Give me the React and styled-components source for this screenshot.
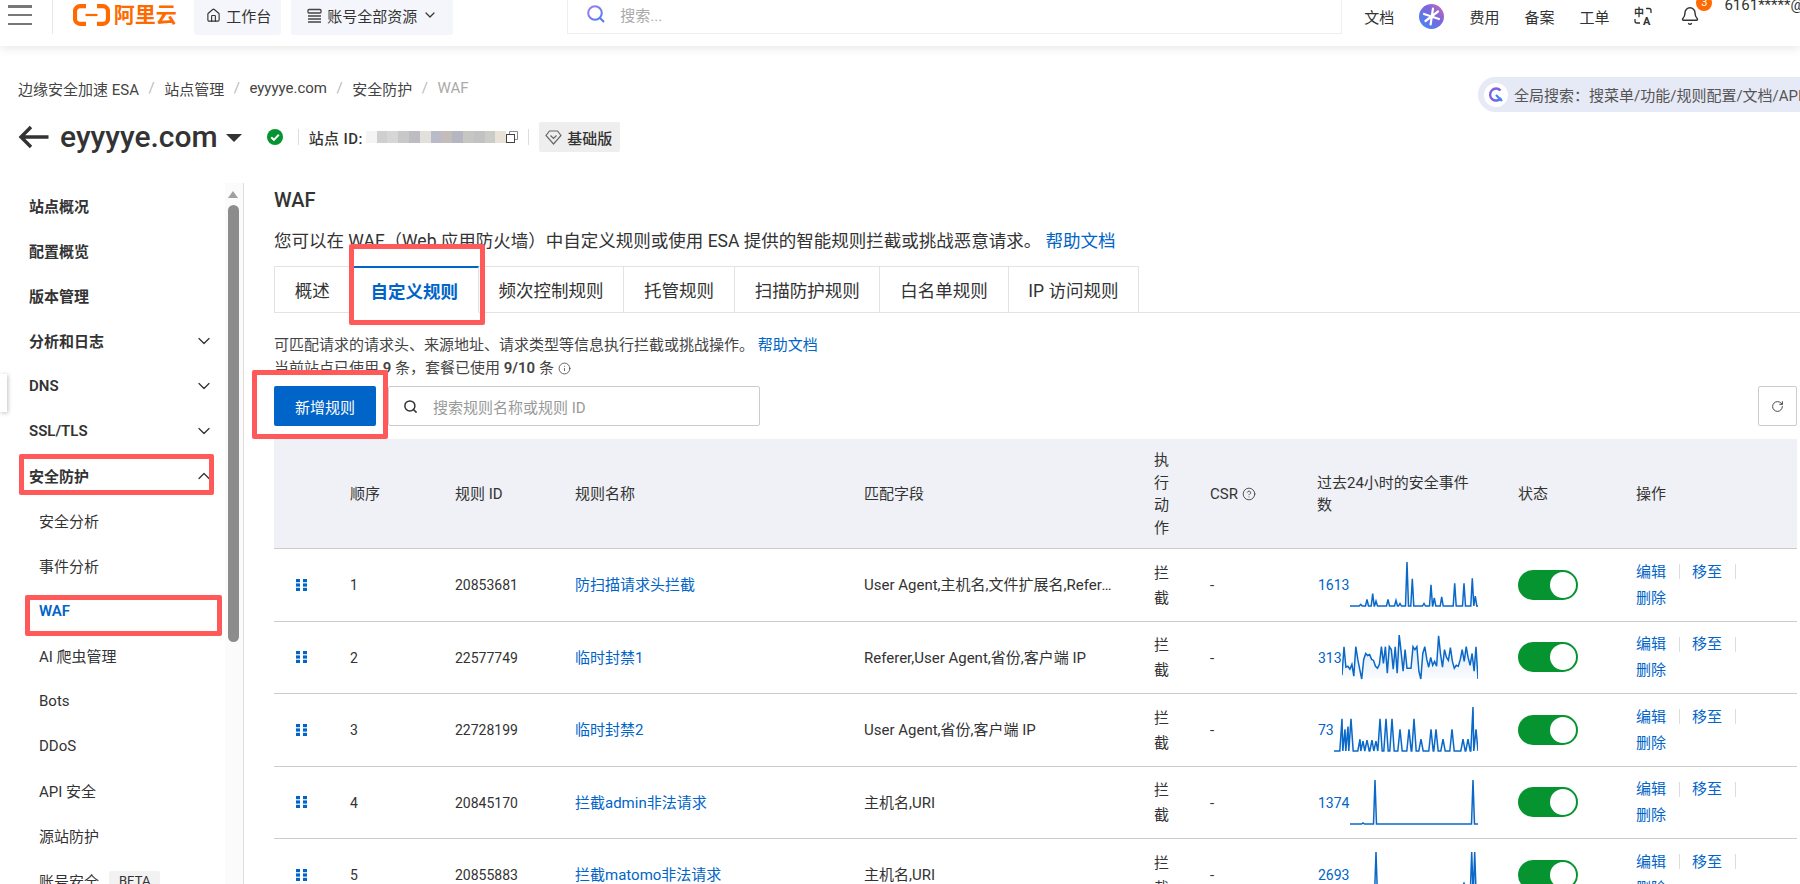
import React from 'react'
import styled, { createGlobalStyle } from 'styled-components'
import { House, ChevronDown, ChevronUp, Search, Bell, RotateCw, Info, CircleHelp } from 'lucide-react'

const sideItems = [
  { label: '站点概况', bold: true },
  { label: '配置概览', bold: true },
  { label: '版本管理', bold: true },
  { label: '分析和日志', bold: true, arrow: 'down' },
  { label: 'DNS', bold: true, arrow: 'down' },
  { label: 'SSL/TLS', bold: true, arrow: 'down' },
  { label: '安全防护', bold: true, arrow: 'up' },
  { label: '安全分析' },
  { label: '事件分析' },
  { label: 'WAF', active: true },
  { label: 'AI 爬虫管理' },
  { label: 'Bots' },
  { label: 'DDoS' },
  { label: 'API 安全' },
  { label: '源站防护' },
  { label: '账号安全', beta: true },
]

const tabs = ['概述', '自定义规则', '频次控制规则', '托管规则', '扫描防护规则', '白名单规则', 'IP 访问规则']

const blurColors = ['#f4f4f4', '#cfcfcf', '#d6d6d6', '#c8c8c8', '#bcbcc2', '#e2e0da', '#b9bcc8', '#c4bcb8', '#b6b6c0', '#c6c6c2', '#c2c2c2', '#cbcbc8', '#e8e2d8']

const rows = [
  {
    id: '20853681', name: '防扫描请求头拦截', match: 'User Agent,主机名,文件扩展名,Referer,URI', count: '1613', width: 128, spread: 1.5,
    peaks: [[10.7, 1.7], [17, 6.7], [22.7, 12.7], [26, 5], [38, 6.7], [46, 5.7], [50, 2.7], [57, 45], [62.3, 27.7], [74, 2.7], [81, 21.7], [84.3, 8.3], [91.7, 9.3], [104.7, 23.3], [114, 23.3], [122.3, 28.3], [125.3, 10]],
  },
  {
    id: '22577749', name: '临时封禁1', match: 'Referer,User Agent,省份,客户端 IP', count: '313', width: 136,
    values: [4, 33, 12, 13, 10, 15, 3, 33, 20, 10, 0, 20, 26, 24, 25, 20, 19, 13, 11, 15, 33, 16, 33, 6, 33, 30, 10, 33, 6, 45, 28, 8, 30, 11, 11, 11, 33, 30, 33, 8, 0, 26, 33, 20, 12, 22, 14, 18, 13, 44, 25, 12, 30, 22, 19, 32, 18, 11, 14, 13, 20, 30, 18, 33, 22, 14, 26, 8, 33, 0],
  },
  {
    id: '22728199', name: '临时封禁2', match: 'User Agent,省份,客户端 IP', count: '73', width: 144, spread: 2.2,
    peaks: [[8, 33], [11, 22], [14, 25], [17, 33], [26, 12], [29, 10], [33, 11], [38, 11], [42, 10], [46, 33], [52, 33], [58, 33], [66, 22], [75, 22], [80, 33], [87, 12], [97, 22], [102, 22], [109, 12], [118, 22], [129, 12], [134, 12], [139, 45], [142, 22]],
  },
  {
    id: '20845170', name: '拦截admin非法请求', match: '主机名,URI', count: '1374', width: 128, spread: 1.5,
    peaks: [[13, 1], [25, 45], [123, 45]],
  },
  {
    id: '20855883', name: '拦截matomo非法请求', match: '主机名,URI', count: '2693', width: 128, spread: 1.5,
    peaks: [[26, 45], [114, 14], [121.7, 45], [124.7, 45]],
  },
]

// sparkline points, y is height above the baseline
const spikePoints = (w, peaks, hw) => {
  const pts = [[0, 0]]
  peaks.forEach(([x, h], i) => {
    const next = peaks[i + 1]
    if (pts[pts.length - 1][0] < x - hw) pts.push([x - hw, 0])
    pts.push([x, h])
    if (!next || next[0] - hw > x + hw) pts.push([Math.min(x + hw, w), 0])
  })
  pts.push([w, 0])
  return pts
}

const valuePoints = (w, values) => values.map((v, i) => [(i * w) / (values.length - 1), v])

function Spark({ row, index }) {
  const w = row.width
  const pts = row.values ? valuePoints(w, row.values) : spikePoints(w, row.peaks, row.spread)
  const line = pts.map(([x, y]) => `${x.toFixed(1)},${(44 - y * 0.98).toFixed(1)}`).join(' ')
  return (
    <svg width={w} height="45" viewBox={`0 0 ${w} 45`}>
      <defs>
        <linearGradient id={`fade${index}`} x1="0" y1="0" x2="0" y2="1">
          <stop offset="0" stopColor="#0064c8" stopOpacity="0.16" />
          <stop offset="1" stopColor="#0064c8" stopOpacity="0.02" />
        </linearGradient>
      </defs>
      <polygon points={`0,44 ${line} ${w},44`} fill={`url(#fade${index})`} />
      <polyline points={line} fill="none" stroke="#0a68c8" strokeWidth="1.5" />
    </svg>
  )
}

function App() {
  return (
    <Page>
      <GlobalStyle />
      <TopBar>
        <Burger><i /><i /><i /></Burger>
        <Logo>
          <svg width="37" height="22" viewBox="0 0 37 22">
            <g fill="none" stroke="#ff6a00" strokeWidth="4.2">
              <path d="M13 2.2H7a5 5 0 0 0-5 5v7.6a5 5 0 0 0 5 5h6" />
              <path d="M24 2.2h6a5 5 0 0 1 5 5v7.6a5 5 0 0 1-5 5h-6" />
            </g>
            <path d="M12.5 11h12" stroke="#ff6a00" strokeWidth="2.2" />
          </svg>
          <span>阿里云</span>
        </Logo>
        <TopBox $w={87} $pl={12}>
          <House size={15} strokeWidth={1.8} />
          工作台
        </TopBox>
        <TopBox $w={162} $pl={16}>
          <svg width="15" height="15" viewBox="0 0 15 15" fill="none" stroke="#444" strokeWidth="1.3">
            <rect x="1" y="1.5" width="13" height="3.5" rx="1" />
            <path d="M1 8h13M14 8v0M1 11h13M1 14h13" />
          </svg>
          账号全部资源
          <ChevronDown size={16} strokeWidth={1.8} />
        </TopBox>
        <TopSearch>
          <svg width="20" height="20" viewBox="0 0 20 20" fill="none">
            <defs>
              <linearGradient id="ring" x1="0" y1="0" x2="1" y2="1">
                <stop offset="0" stopColor="#a77bf0" />
                <stop offset="1" stopColor="#4f7cf0" />
              </linearGradient>
            </defs>
            <circle cx="9" cy="9" r="6.8" stroke="url(#ring)" strokeWidth="2" />
            <path d="M14 14l4 4" stroke="#4f7cf0" strokeWidth="2" />
          </svg>
          <span>搜索...</span>
        </TopSearch>
        <TopRight>
          <span>文档</span>
          <svg width="25" height="25" viewBox="0 0 25 25">
            <defs>
              <linearGradient id="star" x1="0" y1="1" x2="1" y2="0">
                <stop offset="0" stopColor="#3f8cf5" />
                <stop offset="0.6" stopColor="#7b66dc" />
                <stop offset="1" stopColor="#d56bb0" />
              </linearGradient>
            </defs>
            <circle cx="12.5" cy="12.5" r="12.5" fill="url(#star)" />
            <path d="M14 4.5l-2.4 16M5 10l15 5M19 7.5L6.500 17" stroke="#fff" strokeWidth="2.2" strokeLinecap="round" />
          </svg>
          <span>费用</span>
          <span>备案</span>
          <span>工单</span>
          <svg width="20" height="18" viewBox="0 0 20 18" fill="#333" overflow="visible">
            <text x="0" y="9" fontSize="10" fontWeight="700" fontFamily="Noto Sans CJK SC">中</text>
            <text x="9" y="17.500" fontSize="11" fontWeight="700" fontFamily="Roboto">A</text>
            <path d="M12 1.500h3a2 2 0 0 1 2 2V6M1 12v2a2 2 0 0 0 2 2h3" fill="none" stroke="#333" strokeWidth="1.3" />
          </svg>
          <BellWrap>
            <Bell size={20} strokeWidth={1.7} />
            <Badge>3</Badge>
          </BellWrap>
          <UserDivider />
          <UserName>6161*****@</UserName>
        </TopRight>
      </TopBar>

      <CrumbRow>
        <Crumbs>
          <span>边缘安全加速 ESA</span><b>/</b>
          <span>站点管理</span><b>/</b>
          <span>eyyyye.com</span><b>/</b>
          <span>安全防护</span><b>/</b>
          <em>WAF</em>
        </Crumbs>
        <GlobalSearch>
          <PillIcon>
            <svg width="18" height="18" viewBox="0 0 18 18" fill="none">
              <path d="M13.500 4.500A6 6 0 1 0 14 12" stroke="#7a62e0" strokeWidth="2.4" />
              <path d="M9 9l6 6" stroke="#3f8cf5" strokeWidth="2.4" />
            </svg>
          </PillIcon>
          全局搜索：搜菜单/功能/规则配置/文档/API
        </GlobalSearch>
      </CrumbRow>

      <TitleRow>
        <svg width="31" height="24" viewBox="0 0 31 24" fill="none" stroke="#333" strokeWidth="3.4">
          <path d="M30.500 12H4M13 2L3 12l10 10" />
        </svg>
        <SiteName>eyyyye.com</SiteName>
        <Caret />
        <svg width="16" height="16" viewBox="0 0 16 16">
          <circle cx="8" cy="8" r="8" fill="#069431" />
          <path d="M4.200 8.200l2.700 2.700 4.900-5.200" fill="none" stroke="#fff" strokeWidth="2" />
        </svg>
        <VLine />
        <SiteId>站点 ID:</SiteId>
        <Blur>
          {blurColors.map((c, i) => <BlurCell key={i} $c={c} />)}
        </Blur>
        <svg width="12" height="12" viewBox="0 0 12 12" fill="none" stroke="#444">
          <rect x="0.500" y="3.500" width="8" height="8" />
          <path d="M3.500 3V.5h8v8H9" stroke="#888" />
        </svg>
        <VLine $wide />
        <Edition>
          <svg width="17" height="15" viewBox="0 0 17 15" fill="none" stroke="#666" strokeWidth="1.2">
            <path d="M4.500 1h8l3.500 4.500-7.500 8.500L1 5.500z" />
            <path d="M5.500 5.500l3 3 3-3" />
          </svg>
          基础版
        </Edition>
      </TitleRow>

      <Body>
        <Sidebar>
          <Menu>
            {sideItems.map((item) => (
              <MenuItem key={item.label} $bold={item.bold} $active={item.active}>
                {item.label}
                {item.beta && <Beta>BETA</Beta>}
                {item.arrow === 'down' && <MenuArrow><ChevronDown size={20} strokeWidth={1.5} /></MenuArrow>}
                {item.arrow === 'up' && <MenuArrow><ChevronUp size={20} strokeWidth={1.5} /></MenuArrow>}
              </MenuItem>
            ))}
          </Menu>
          <ScrollTrack>
            <ScrollUp />
            <ScrollThumb />
          </ScrollTrack>
        </Sidebar>

        <Main>
          <H1>WAF</H1>
          <Desc>您可以在 WAF（Web 应用防火墙）中自定义规则或使用 ESA 提供的智能规则拦截或挑战恶意请求。 <a>帮助文档</a></Desc>
          <TabBar>
            {tabs.map((t, i) => <Tab key={t} $active={i === 1}>{t}</Tab>)}
          </TabBar>
          <Hint>可匹配请求的请求头、来源地址、请求类型等信息执行拦截或挑战操作。 <a>帮助文档</a></Hint>
          <Hint>当前站点已使用 <b>9</b> 条，套餐已使用 <b>9/10</b> 条 <Info size={13} strokeWidth={1.5} /></Hint>
          <Toolbar>
            <AddButton>新增规则</AddButton>
            <SearchBox>
              <Search size={15} strokeWidth={2.4} color="#333" />
              <span>搜索规则名称或规则 ID</span>
            </SearchBox>
            <RefreshButton><RotateCw size={13} strokeWidth={1.6} /></RefreshButton>
          </Toolbar>

          <Table>
            <HeadRow>
              <HeadCell />
              <HeadCell>顺序</HeadCell>
              <HeadCell>规则 ID</HeadCell>
              <HeadCell>规则名称</HeadCell>
              <HeadCell>匹配字段</HeadCell>
              <HeadCell>执行动作</HeadCell>
              <HeadCell>CSR&nbsp;<CircleHelp size={14} strokeWidth={1.4} /></HeadCell>
              <HeadCell>过去24小时的安全事件数</HeadCell>
              <HeadCell>状态</HeadCell>
              <HeadCell>操作</HeadCell>
            </HeadRow>
            {rows.map((r, i) => (
              <DataRow key={r.id}>
                <DragCell>
                  <svg width="11" height="12" viewBox="0 0 11 12" fill="#0064c8">
                    <rect x="0" y="0" width="4" height="3.200" />
                    <rect x="7" y="0" width="4" height="3.200" />
                    <rect x="0" y="4.400" width="4" height="3.200" />
                    <rect x="7" y="4.400" width="4" height="3.200" />
                    <rect x="0" y="8.800" width="4" height="3.200" />
                    <rect x="7" y="8.800" width="4" height="3.200" />
                  </svg>
                </DragCell>
                <NumCell>{i + 1}</NumCell>
                <NumCell>{r.id}</NumCell>
                <TextCell><RuleLink>{r.name}</RuleLink></TextCell>
                <MatchCell><span>{r.match}</span></MatchCell>
                <TextCell>拦截</TextCell>
                <TextCell>-</TextCell>
                <EventCell>
                  <a>{r.count}</a>
                  <Spark row={r} index={i} />
                </EventCell>
                <Cell><Toggle><Knob /></Toggle></Cell>
                <OpsCell>
                  <Ops>
                    <Op>编辑</Op>
                    <Op>移至</Op>
                    <Op>删除</Op>
                  </Ops>
                </OpsCell>
              </DataRow>
            ))}
          </Table>
        </Main>
      </Body>

      <CollapseHandle />
      <Mark $x={19} $y={454} $w={195} $h={41} />
      <Mark $x={25} $y={595} $w={197} $h={41} />
      <Mark $x={349} $y={244} $w={136} $h={81} />
      <Mark $x={252} $y={370} $w={136} $h={69} />
    </Page>
  )
}

export default App

const GlobalStyle = createGlobalStyle`
  html, body {
    margin: 0;
    height: 100%;
    overflow: hidden;
    background: #fff;
  }
  * { box-sizing: border-box; }
  a { color: #0064c8; cursor: pointer; }
`

const Page = styled.div`
  position: relative;
  width: 1800px;
  height: 884px;
  overflow: hidden;
  font-family: Roboto, "Noto Sans CJK SC", sans-serif;
  font-size: 15px;
  color: #333;
`

const TopBar = styled.header`
  display: flex;
  align-items: flex-start;
  height: 46px;
  background: #fff;
  box-shadow: 0 2px 10px rgba(0, 0, 0, 0.1);
  overflow: hidden;
  position: relative;
`

const Burger = styled.div`
  display: flex;
  flex-direction: column;
  justify-content: space-between;
  width: 53px;
  height: 34px;
  padding: 5px 20px 9px 8px;
  border-right: 1px solid #e8e8e8;
  i {
    display: block;
    height: 2.5px;
    background: #777;
  }
`

const Logo = styled.div`
  display: flex;
  align-items: center;
  gap: 4px;
  width: 143px;
  height: 30px;
  padding-left: 20px;
  color: #ff6a00;
  font-size: 21px;
  font-weight: 700;
  line-height: 30px;
`

const TopBox = styled.div`
  display: flex;
  align-items: center;
  gap: 5px;
  flex: none;
  width: ${(p) => p.$w}px;
  height: 35px;
  margin-right: 10px;
  padding: 0 0 5px ${(p) => p.$pl}px;
  background: #f5f6fb;
  border-radius: 0 0 3px 3px;
  white-space: nowrap;
  svg { flex: none; }
`

const TopSearch = styled.div`
  display: flex;
  align-items: center;
  gap: 14px;
  flex: none;
  width: 775px;
  height: 34px;
  margin-left: 104px;
  padding: 0 0 5px 18px;
  border: 1px solid #eeeef7;
  border-top: none;
  color: #aaa;
`

const TopRight = styled.div`
  display: flex;
  align-items: center;
  gap: 25px;
  height: 32px;
  margin-left: 22px;
  span { flex: none; }
  svg { flex: none; }
`

const BellWrap = styled.div`
  position: relative;
  display: flex;
  margin-left: 1px;
`

const Badge = styled.span`
  position: absolute;
  top: -11px;
  right: -12px;
  width: 16px;
  height: 16px;
  border-radius: 50%;
  background: #ff6a00;
  color: #fff;
  font-size: 11px;
  line-height: 16px;
  text-align: center;
`

const UserDivider = styled.div`
  width: 1px;
  height: 34px;
  margin-left: -12px;
  background: #eee;
`

const UserName = styled.span`
  align-self: flex-start;
  margin: -5px 0 0 -14px;
  line-height: 20px;
  white-space: nowrap;
`

const CrumbRow = styled.div`
  display: flex;
  align-items: flex-start;
  justify-content: space-between;
  height: 35px;
  margin-top: 31px;
  padding-left: 18px;
`

const Crumbs = styled.nav`
  display: flex;
  align-items: center;
  height: 22px;
  color: #444;
  b {
    margin: 0 9.500px;
    color: #bbb;
    font-weight: 400;
  }
  em {
    color: #aaa;
    font-style: normal;
  }
`

const GlobalSearch = styled.div`
  display: flex;
  align-items: center;
  gap: 6px;
  flex: none;
  width: 342px;
  height: 35px;
  margin-right: -20px;
  padding-left: 6px;
  border-radius: 18px 0 0 18px;
  background: #e6e9f6;
  color: #555;
  white-space: nowrap;
`

const PillIcon = styled.span`
  display: flex;
  align-items: center;
  justify-content: center;
  width: 24px;
  height: 24px;
  border-radius: 50%;
  background: #fff;
`

const TitleRow = styled.div`
  display: flex;
  align-items: center;
  height: 30px;
  margin-top: 10px;
  padding-left: 18px;
`

const SiteName = styled.h2`
  margin: 0 0 0 11px;
  font-size: 30px;
  font-weight: 500;
  line-height: 30px;
  color: #333;
`

const Caret = styled.span`
  width: 0;
  height: 0;
  margin: 2px 25px 0 8px;
  border-left: 8.500px solid transparent;
  border-right: 8.500px solid transparent;
  border-top: 8px solid #333;
`

const VLine = styled.span`
  width: 1px;
  height: 16px;
  margin: 0 10px 0 ${(p) => (p.$wide ? '10px' : '15px')};
  background: #ddd;
`

const SiteId = styled.span`
  font-weight: 500;
  letter-spacing: 0.4px;
  white-space: nowrap;
`

const Blur = styled.div`
  display: flex;
  margin-left: 3px;
`

const BlurCell = styled.i`
  display: block;
  width: 10.800px;
  height: 12px;
  background: ${(p) => p.$c};
`

const Edition = styled.div`
  display: flex;
  align-items: center;
  gap: 5px;
  height: 30px;
  padding: 0 8px 0 6px;
  background: #eee;
  border-radius: 2px;
  font-weight: 500;
  white-space: nowrap;
`

const Body = styled.div`
  display: flex;
  margin-top: 31px;
  height: 701px;
`

const Sidebar = styled.aside`
  display: flex;
  flex: none;
  width: 244px;
  border-right: 1px solid #ddd;
  overflow: hidden;
`

const Menu = styled.nav`
  flex: 1;
`

const MenuItem = styled.div`
  display: flex;
  align-items: center;
  height: 45px;
  padding-left: ${(p) => (p.$bold ? '29px' : '39px')};
  padding-right: 11px;
  font-weight: ${(p) => (p.$bold || p.$active ? 600 : 400)};
  color: ${(p) => (p.$active ? '#0064c8' : '#333')};
`

const MenuArrow = styled.span`
  display: flex;
  margin-left: auto;
`

const Beta = styled.span`
  margin-left: 10px;
  padding: 2px 10px;
  background: #f2f2f2;
  border-radius: 2px;
  font-size: 13px;
`

const ScrollTrack = styled.div`
  flex: none;
  width: 18px;
  padding-left: 3px;
  background: #fbfbfb;
`

const ScrollUp = styled.div`
  width: 0;
  height: 0;
  margin: 8px 0 7px;
  border-left: 5.500px solid transparent;
  border-right: 5.500px solid transparent;
  border-bottom: 7px solid #a0a0a0;
`

const ScrollThumb = styled.div`
  width: 11px;
  height: 437px;
  border-radius: 6px;
  background: #8c8c8c;
`

const Main = styled.main`
  flex: 1;
  min-width: 0;
  padding: 0 3px 0 30px;
`

const H1 = styled.h1`
  margin: 0;
  padding-top: 1px;
  font-size: 20px;
  font-weight: 500;
  line-height: 32px;
`

const Desc = styled.p`
  margin: 13px 0 13px;
  font-size: 17.500px;
  line-height: 24px;
  white-space: nowrap;
`

const TabBar = styled.div`
  display: flex;
  height: 47px;
  margin-bottom: 21px;
  margin-right: -3px;
  border-bottom: 1px solid #e3e3e3;
`

const Tab = styled.div`
  display: flex;
  align-items: center;
  height: 47px;
  padding: 0 19.800px;
  border: 1px solid #e3e3e3;
  border-left-width: 0;
  &:first-child { border-left-width: 1px; }
  font-size: 17.500px;
  white-space: nowrap;
  ${(p) => p.$active && `
    border-top: 2px solid #0064c8;
    border-bottom-color: #fff;
    color: #0064c8;
    font-weight: 600;
  `}
`

const Hint = styled.div`
  height: 23px;
  line-height: 23px;
  color: #444;
  white-space: nowrap;
  b { font-weight: 600; }
  svg { vertical-align: -2px; }
`

const Toolbar = styled.div`
  display: flex;
  height: 40px;
  margin: 6px 0 13px;
`

const AddButton = styled.button`
  flex: none;
  width: 102px;
  height: 40px;
  padding: 0;
  border: none;
  border-radius: 2px;
  background: #0064c8;
  color: #fff;
  font: inherit;
`

const SearchBox = styled.div`
  display: flex;
  align-items: center;
  gap: 15px;
  width: 372px;
  height: 40px;
  margin-left: 12px;
  padding-left: 14px;
  border: 1px solid #ccc;
  border-radius: 2px;
  color: #999;
`

const RefreshButton = styled.button`
  display: flex;
  align-items: center;
  justify-content: center;
  width: 39px;
  height: 40px;
  margin-left: auto;
  padding: 0;
  border: 1px solid #ccc;
  border-radius: 2px;
  background: #fff;
  color: #333;
`

const Table = styled.div`
  width: 1523px;
`

const columns = '56px 105px 120px 289px 290px 56px 107px 201px 118px 181px'

const HeadRow = styled.div`
  display: grid;
  grid-template-columns: ${columns};
  height: 110px;
  align-items: center;
  background: #eff1f6;
  border-bottom: 1px solid #ccc;
  line-height: 22.500px;
`

const DataRow = styled.div`
  display: grid;
  grid-template-columns: ${columns};
  height: 72.500px;
  align-items: center;
  border-bottom: 1px solid #ccc;
  line-height: 25px;
`

const Cell = styled.div`
  padding: 0 20px;
  min-width: 0;
  svg { vertical-align: -2px; }
`

const HeadCell = styled(Cell)`
  padding-top: 1px;
`

const TextCell = styled(Cell)`
  padding-top: 2px;
`

const DragCell = styled(Cell)`
  display: flex;
  padding: 0 0 0 22px;
`

const NumCell = styled(TextCell)`
  font-size: 14px;
`

const RuleLink = styled.a`
  white-space: nowrap;
`

const MatchCell = styled(TextCell)`
  span {
    display: block;
    overflow: hidden;
    text-overflow: ellipsis;
    white-space: nowrap;
  }
`

const EventCell = styled(Cell)`
  display: flex;
  align-items: center;
  justify-content: space-between;
  font-size: 14px;
  a { padding: 2px 0 0 1px; }
  svg { display: block; flex: none; }
`

const Toggle = styled.div`
  display: flex;
  justify-content: flex-end;
  align-items: center;
  width: 60px;
  height: 30px;
  padding-right: 2px;
  border-radius: 15px;
  background: #069431;
`

const Knob = styled.span`
  width: 26px;
  height: 26px;
  border-radius: 50%;
  background: #fff;
`

const OpsCell = styled(Cell)`
  line-height: 26px;
`

const Ops = styled.div`
  display: flex;
  flex-wrap: wrap;
  width: 120px;
`

const Op = styled.a`
  display: inline-flex;
  align-items: center;
  &:not(:last-child)::after {
    content: "";
    width: 1px;
    height: 15px;
    margin: 0 12px 0 13px;
    background: #ddd;
  }
`

const CollapseHandle = styled.div`
  position: absolute;
  left: 0;
  top: 374px;
  width: 7px;
  height: 38px;
  background: #fff;
  box-shadow: 1px 1px 4px rgba(0, 0, 0, 0.25);
`

const Mark = styled.div`
  position: absolute;
  left: ${(p) => p.$x}px;
  top: ${(p) => p.$y}px;
  width: ${(p) => p.$w}px;
  height: ${(p) => p.$h}px;
  border: 5px solid #ff5959;
  border-radius: 2px;
  pointer-events: none;
`
